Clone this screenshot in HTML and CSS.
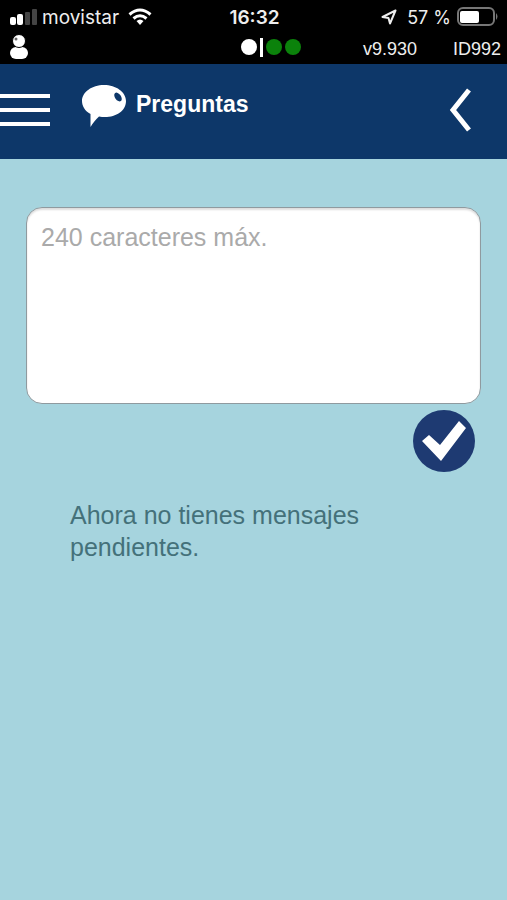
FILE: index.html
```html
<!DOCTYPE html>
<html lang="es">
<head>
  <meta charset="UTF-8" />
  <meta name="viewport" content="width=device-width, initial-scale=1" />
  <title>Preguntas</title>
  <link rel="stylesheet" href="styles.css">
</head>
<body>

  <div class="phone-bar">
    <div class="carrier">
      <svg width="28" height="18" viewBox="0 0 28 18">
        <rect x="0" y="9" width="6" height="8" rx="2" fill="#fff"/>
        <rect x="7" y="6" width="6" height="11" rx="2" fill="#fff"/>
        <rect x="15" y="4" width="5" height="13" rx="1" fill="#444"/>
        <rect x="22" y="1" width="5" height="16" rx="1" fill="#444"/>
      </svg>
      <span>movistar</span>
      <svg class="wifi" width="24" height="18" viewBox="0 0 24 18" fill="none" stroke="#fff" stroke-width="3">
        <path d="M1.5 6.5 Q12 -2.5 22.5 6.5"/>
        <path d="M5.5 10.5 Q12 5 18.5 10.5"/>
        <path d="M8.5 13 Q12 10 15.5 13 L12 17 Z" fill="#fff" stroke="none"/>
      </svg>
    </div>
    <div class="time">16:32</div>
    <div class="battery">
      <svg width="16" height="16" viewBox="0 0 16 16" fill="none" stroke="#eee" stroke-width="2" stroke-linejoin="round">
        <path d="M14.500 1.500 L1.500 8 L7.500 9 L9 14.500 Z"/>
      </svg>
      <span>57 %</span>
      <svg width="42" height="20" viewBox="0 0 42 20">
        <rect x="1" y="1" width="36" height="17" rx="5" fill="none" stroke="#777" stroke-width="2"/>
        <rect x="3" y="4" width="19" height="12" rx="2" fill="#fff"/>
        <path d="M39 6 Q42 9.500 39 13 Z" fill="#777"/>
      </svg>
    </div>
  </div>

  <div class="app-bar">
    <svg width="20" height="26" viewBox="0 0 20 26">
      <rect x="0" y="13" width="18" height="12" rx="6" fill="#fff"/>
      <circle cx="9" cy="7" r="6.500" fill="#fff" stroke="#000" stroke-width="1"/>
      <circle cx="6" cy="5" r="1.500" fill="#666"/>
    </svg>
    <div class="dots">
      <span class="dot"></span>
      <span class="separator"></span>
      <span class="dot green"></span>
      <span class="dot green"></span>
    </div>
    <div class="info">
      <span>v9.930</span>
      <span>ID992</span>
    </div>
  </div>

  <header class="header">
    <button class="menu-btn" type="button" aria-label="Menú">
      <svg width="51" height="36" viewBox="0 0 51 36" fill="#fff">
        <rect x="0" y="2" width="50" height="4"/>
        <rect x="0" y="16" width="50" height="4"/>
        <rect x="0" y="30" width="50" height="4"/>
      </svg>
    </button>
    <div class="title">
      <svg width="46" height="44" viewBox="0 0 46 44">
        <path d="M23 1 C35 1 45 8 45 17 C45 27 35 33 24 33 C22 33 20 33 18 32.500 C15 35 12 39 9.500 43 L9.500 30 C4 27 1 22 1 17 C1 8 11 1 23 1 Z" fill="#fff"/>
        <ellipse cx="37" cy="13" rx="3" ry="5" transform="rotate(-35 37 13)" fill="#0d3769"/>
      </svg>
      <h1>Preguntas</h1>
    </div>
    <button class="back-btn" type="button" aria-label="Volver">
      <svg width="24" height="44" viewBox="0 0 24 44" fill="none" stroke="#fff" stroke-width="5">
        <path d="M20 2 L4 22 L20 42"/>
      </svg>
    </button>
  </header>

  <main>
    <form class="question">
      <textarea id="question" maxlength="240" placeholder="240 caracteres máx." aria-label="Pregunta"></textarea>
      <button class="send-btn" type="button" aria-label="Enviar">
        <svg width="64" height="64" viewBox="0 0 64 64">
          <circle cx="32" cy="32" r="31" fill="#1e3a72"/>
          <path d="M10 32 L17 26 L28 36 L47 12 L54 19 L29 52 Z" fill="#fff"/>
        </svg>
      </button>
    </form>
    <p class="message">Ahora no tienes mensajes pendientes.</p>
  </main>

</body>
</html>
```
FILE: styles.css
```css
* {
  box-sizing: border-box;
}
body {
  margin: 0;
  font-family: "Liberation Sans", Arial, sans-serif;
  background: #a6d4de;
}
button {
  padding: 0;
  border: none;
  background: none;
  cursor: pointer;
}
svg {
  display: block;
}
.phone-bar {
  display: grid;
  grid-template-columns: 1fr auto 1fr;
  align-items: center;
  height: 34px;
  padding: 0 8px 0 10px;
  background: #000;
  color: #eee;
  font-family: Inter, sans-serif;
  font-size: 19px;
}
.carrier, .battery {
  display: flex;
  align-items: center;
  gap: 4px;
}
.wifi {
  margin-left: 5px;
}
.time {
  font-weight: 600;
}
.battery {
  justify-content: flex-end;
  gap: 6px;
  font-size: 18px;
}
.battery span {
  margin-left: 4px;
}
.app-bar {
  display: grid;
  grid-template-columns: 1fr auto 1fr;
  align-items: center;
  height: 30px;
  padding: 0 6px 4px 10px;
  background: #000;
  color: #eee;
  font-size: 18px;
}
.dots {
  display: flex;
  align-items: center;
  gap: 3px;
  margin-left: 30px;
}
.dot {
  width: 16px;
  height: 16px;
  border-radius: 50%;
  background: #fff;
}
.dot.green {
  background: #0b820b;
}
.separator {
  width: 3px;
  height: 19px;
  background: #fff;
}
.info {
  display: flex;
  justify-content: flex-end;
  gap: 36px;
  padding-top: 4px;
}
.header {
  display: flex;
  align-items: center;
  height: 95px;
  padding: 0 34px 4px 0;
  background: #0d3769;
  color: #fff;
}
.menu-btn {
  margin-right: 30px;
}
.title {
  display: flex;
  gap: 9px;
  margin-right: auto;
  padding-bottom: 8px;
}
.title h1 {
  margin: 7px 0 0;
  font-size: 23px;
}
main {
  padding: 48px 26px;
}
.question {
  display: flex;
  flex-direction: column;
}
textarea {
  width: 100%;
  height: 197px;
  padding: 14px;
  border: 1px solid #8f9a9f;
  border-radius: 16px;
  background: #fff;
  box-shadow: inset 0 2px 2px #ddd;
  font-family: inherit;
  font-size: 25px;
  line-height: 30px;
  resize: none;
}
textarea::placeholder {
  color: #aaa;
}
.send-btn {
  align-self: flex-end;
  margin: 5px 5px 0 0;
}
.message {
  margin: 26px 44px;
  color: #44717a;
  font-size: 25px;
  line-height: 32px;
}
```
